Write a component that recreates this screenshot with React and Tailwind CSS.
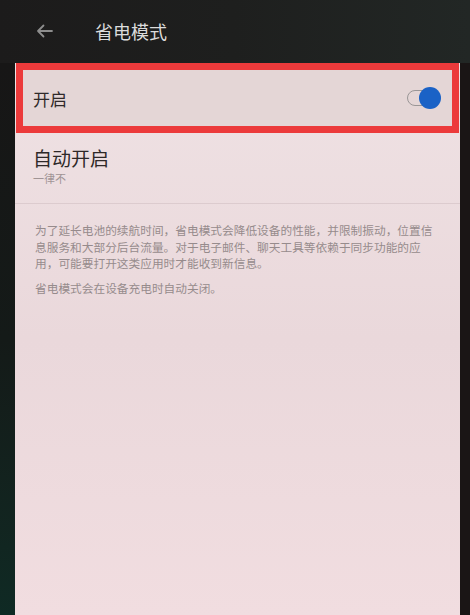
import React from 'react';

const font = { fontFamily: '"Noto Sans CJK SC", "Noto Sans", sans-serif' };

function Toggle() {
  return (
    <div className="relative w-[34px] h-[22px] flex items-center">
      <div className="absolute left-0 top-[3px] w-[28px] h-[16px] rounded-full border-[1.5px] border-[#9a9696]" />
      <div className="absolute right-0 top-0 w-[22px] h-[22px] rounded-full bg-[#1a62c6]" />
    </div>
  );
}

export default function App() {
  return (
    <div style={font} className="w-[470px] h-[615px] flex flex-col bg-[#141414] overflow-hidden">
      <div className="h-[63px] shrink-0 flex items-center bg-gradient-to-r from-[#1c1b1b] via-[#1e1f1e] to-[#222725] pb-[2px]">
        <svg className="ml-[36px]" width="17" height="14" viewBox="0 0 17 14" fill="none" stroke="#8d8d8d" strokeWidth="1.8" strokeLinecap="round" strokeLinejoin="round">
          <path d="M16 7H2M7.5 1.5L2 7l5.5 5.5" />
        </svg>
        <span className="ml-[42px] text-[18px] text-[#dcdcdc] leading-none">省电模式</span>
      </div>

      <div className="flex-1 flex">
        <div className="w-[15px] shrink-0 bg-gradient-to-b from-[#171616] via-[#141a18] to-[#0f2a24]" />
        <div className="flex-1 min-w-0 flex flex-col bg-gradient-to-b from-[#efe2e4] via-[#ead8db] to-[#f1dde0]">
          <div className="mx-[1px] h-[70px] border-[7px] border-[#ec3a3b] bg-[#e4d6d6] flex items-center justify-between pl-[10px] pr-[11px]">
            <span className="text-[17px] text-[#2f2a2a] leading-none">开启</span>
            <Toggle />
          </div>

          <div className="pl-[18px] pt-[12px] pb-[18px]">
            <div className="text-[19px] leading-[26px] text-[#2e2828]">自动开启</div>
            <div className="text-[11px] leading-[14px] text-[#a09495]">一律不</div>
          </div>
          <div className="h-px bg-[#dccbce]" />

          <div className="pl-[20px] pr-[21px] pt-[18px] text-[11.7px] leading-[16.5px] text-[#968b8c]">
            <p>为了延长电池的续航时间，省电模式会降低设备的性能，并限制振动，位置信息服务和大部分后台流量。对于电子邮件、聊天工具等依赖于同步功能的应用，可能要打开这类应用时才能收到新信息。</p>
            <p className="mt-[8.5px]">省电模式会在设备充电时自动关闭。</p>
          </div>
        </div>
        <div className="w-[10px] shrink-0 bg-[#1a1515]" />
      </div>
    </div>
  );
}
